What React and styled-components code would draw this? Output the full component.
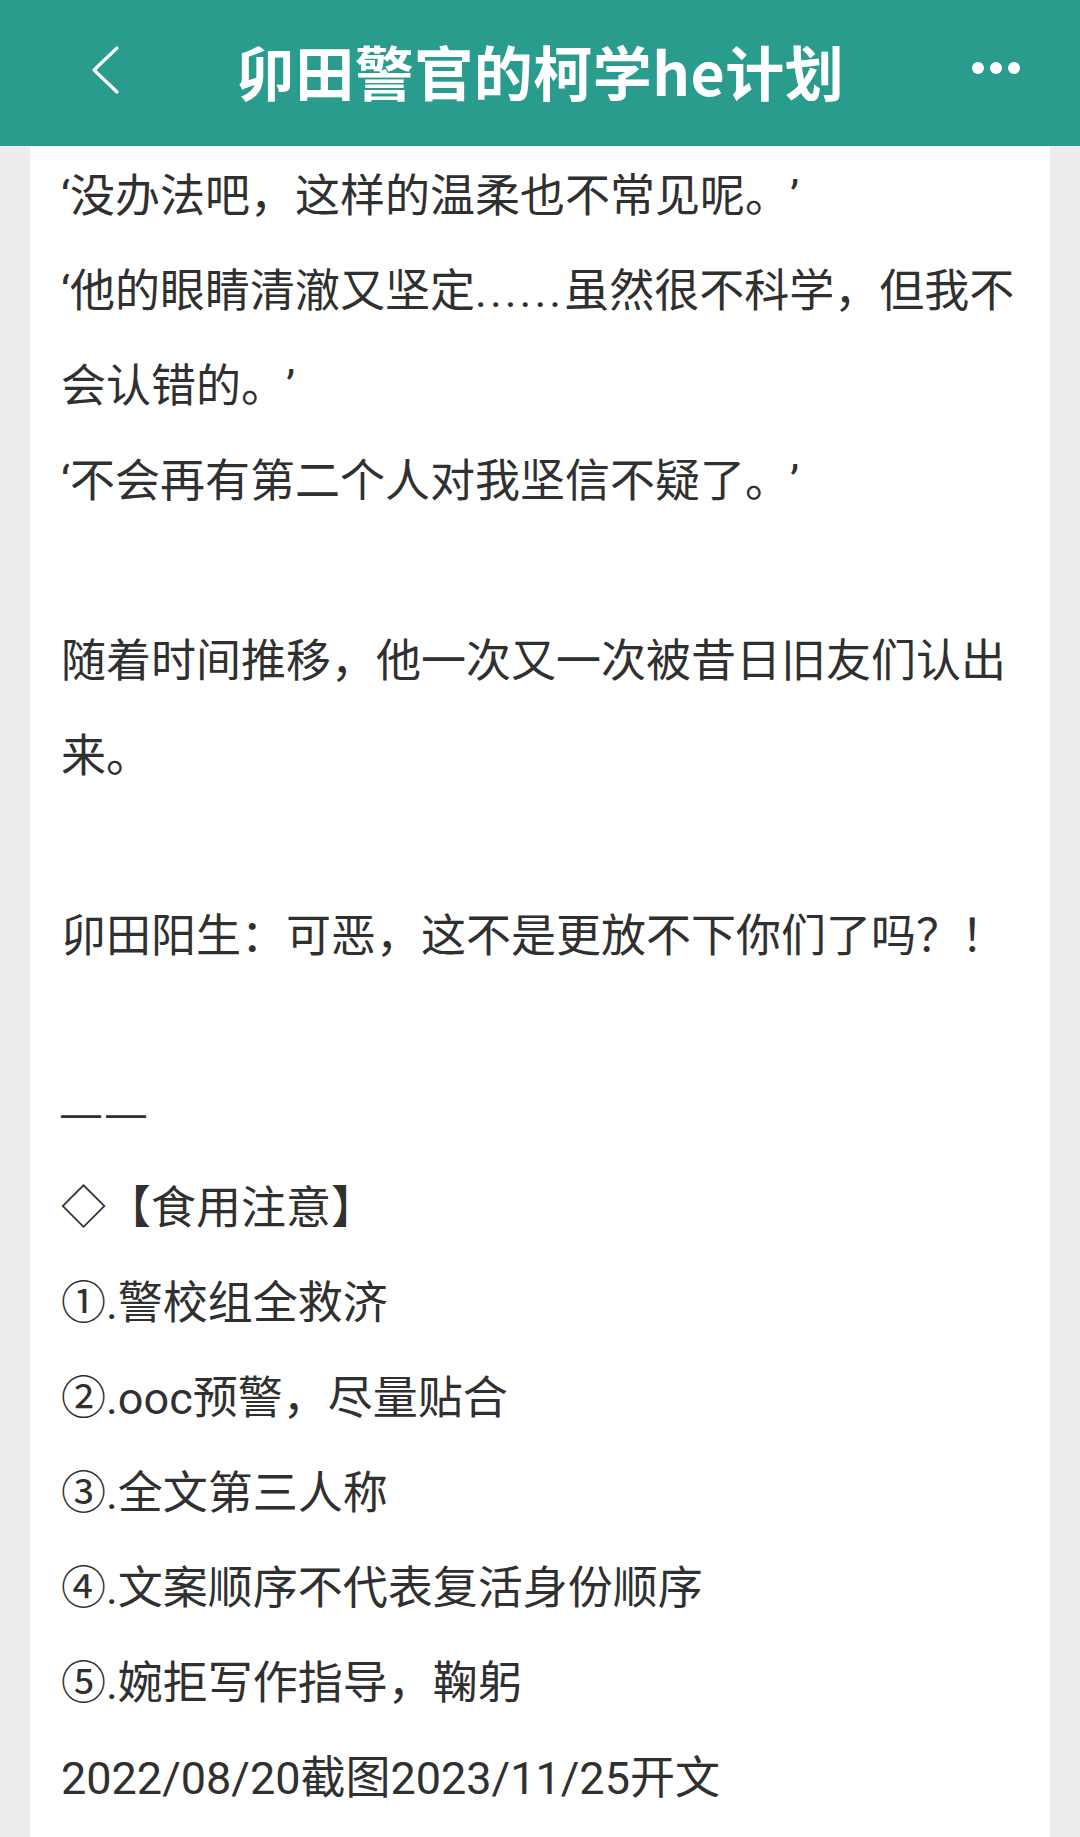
import React from 'react';
import styled, { createGlobalStyle } from 'styled-components';

const GlobalStyle = createGlobalStyle`
  html, body {
    margin: 0;
    padding: 0;
    background: #ededed;
  }
  body {
    font-family: Roboto, "Noto Sans CJK SC", sans-serif;
  }
`;

const lines = [
  { text: '‘没办法吧，这样的温柔也不常见呢。’' },
  { text: '‘他的眼睛清澈又坚定', dots: true, rest: '虽然很不科学，但我不会认错的。’' },
  { text: '‘不会再有第二个人对我坚信不疑了。’' },
  { blank: 85 },
  { text: '随着时间推移，他一次又一次被昔日旧友们认出来。' },
  { blank: 85 },
  { text: '卯田阳生：可恶，这不是更放不下你们了吗？！' },
  { blank: 78 },
  { dash: true },
  { text: '◇【食用注意】' },
  { text: '①.警校组全救济' },
  { text: '②.ooc预警，尽量贴合' },
  { text: '③.全文第三人称' },
  { text: '④.文案顺序不代表复活身份顺序' },
  { text: '⑤.婉拒写作指导，鞠躬' },
  { text: '2022/08/20截图2023/11/25开文' },
];

const App = () => {
  return (
    <>
      <GlobalStyle />
      <Page>
        <Header>
          <BackButton>
            <svg width="30" height="50" viewBox="0 0 30 50" fill="none">
              <path d="M27 3 L4 25 L27 47" stroke="#fff" strokeWidth="3.2" strokeLinecap="round" strokeLinejoin="round" />
            </svg>
          </BackButton>
          <Title>卯田警官的柯学he计划</Title>
          <MoreButton>
            <Dot />
            <Dot />
            <Dot />
          </MoreButton>
        </Header>
        <Card>
          {lines.map((line, i) => {
            if (line.blank) return <Blank key={i} h={line.blank} />;
            if (line.dash) {
              return (
                <Line key={i}>
                  <Dash><span>—</span><span>—</span></Dash>
                </Line>
              );
            }
            return (
              <Line key={i}>
                {line.text}
                {line.dots && <Ellipsis>......</Ellipsis>}
                {line.rest}
              </Line>
            );
          })}
        </Card>
      </Page>
    </>
  );
};

const Page = styled.div`
  display: flex;
  flex-direction: column;
  min-height: 100vh;
`;

const Header = styled.header`
  height: 146px;
  background-color: #2a9c8e;
  display: grid;
  grid-template-columns: 1fr auto 1fr;
  align-items: center;
`;

const BackButton = styled.div`
  display: flex;
  align-items: center;
  padding-left: 90px;
  padding-bottom: 6px;
`;

const Title = styled.h1`
  margin: 0;
  color: #fff;
  font-family: "Noto Sans CJK SC", sans-serif;
  font-weight: 700;
  font-size: 59px;
  letter-spacing: 0.5px;
  line-height: 1;
  padding-bottom: 6px;
`;

const MoreButton = styled.div`
  display: flex;
  justify-content: flex-end;
  gap: 6px;
  padding-right: 60px;
  padding-bottom: 10px;
`;

const Dot = styled.span`
  width: 12px;
  height: 12px;
  border-radius: 50%;
  background: #fff;
`;

const Card = styled.main`
  flex: 1;
  margin: 0 30px;
  background: #fff;
  padding: 3px 18px 40px 31px;
`;

const Line = styled.p`
  margin: 0;
  font-size: 45px;
  line-height: 95px;
  color: #303030;
  text-spacing-trim: space-all;
`;

const Dash = styled.span`
  display: inline-flex;
  gap: 5px;
  font-family: "Liberation Sans", sans-serif;
  font-size: 40px;
  vertical-align: -2px;
`;

const Ellipsis = styled.span`
  letter-spacing: 3px;
`;

const Blank = styled.div`
  height: ${props => props.h}px;
`;

export default App;
